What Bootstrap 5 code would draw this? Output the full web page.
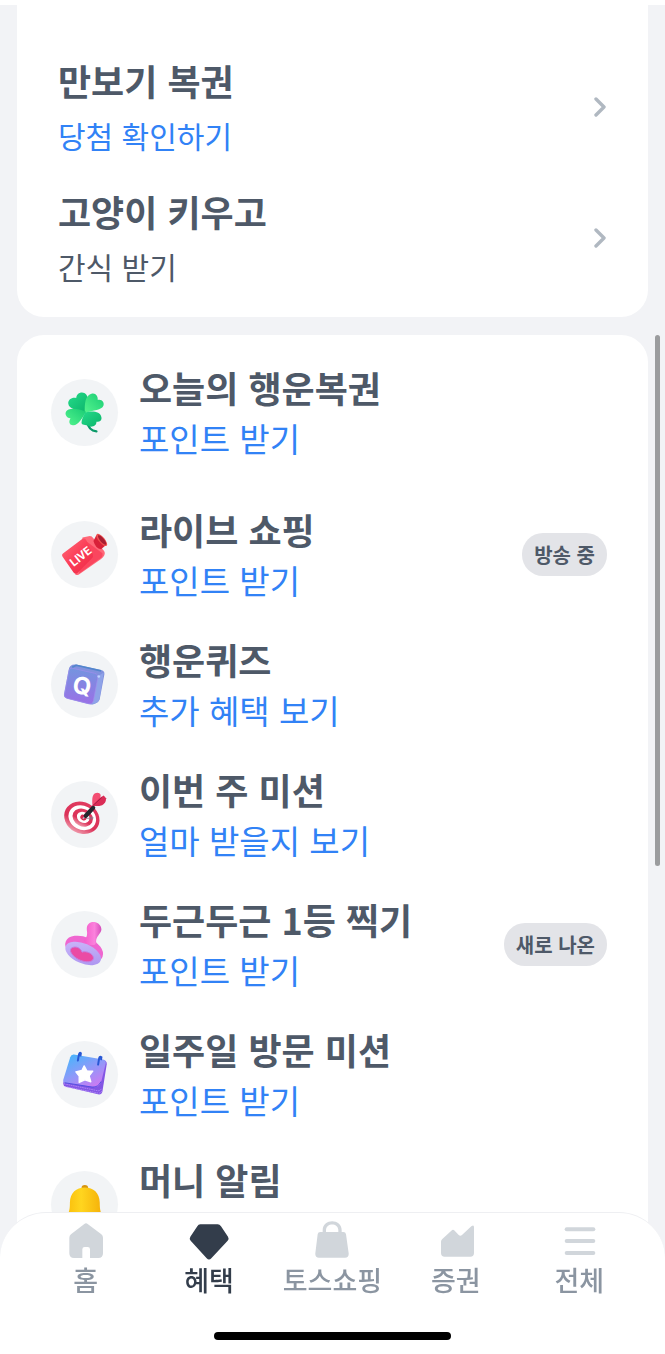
<!DOCTYPE html>
<html lang="ko">
<head>
<meta charset="utf-8">
<meta name="viewport" content="width=device-width, initial-scale=1">
<title>혜택</title>
<link href="https://cdn.jsdelivr.net/npm/bootstrap@5.3.0/dist/css/bootstrap.min.css" rel="stylesheet">
<style>
  body { background: #f2f3f6; color: #4e5968; font-family: "Noto Sans CJK KR", sans-serif; overflow: hidden; }
  a { color: inherit; text-decoration: none; }
  .page { height: 100vh; border-top: 5px solid #fff; padding: 0 17px; overflow: hidden; }
  .panel { background: #fff; border-radius: 27px; }
  .panel-top { border-radius: 0 0 27px 27px; padding: 36px 41px 14px; margin-bottom: 18px; }
  .panel-list { padding: 12px 41px 0 34px; }
  .game { height: 131px; }
  .benefit { height: 130px; gap: 21px; }
  .benefit-first { margin-bottom: 12px; }
  .row-title { font-size: 36px; font-weight: 700; line-height: 52px; }
  .game .row-title { line-height: 56px; }
  .game .row-note { font-size: 30px; line-height: 54px; }
  .row-note { font-size: 33px; line-height: 50px; }
  .text-point { color: #3182f6; }
  .disc { width: 67px; height: 67px; border-radius: 50%; background: #f2f4f6; flex: none; }
  .tag { background: #e3e4e8; color: #4e5968; border-radius: 21px; padding: 0 12px; font-size: 20px; font-weight: 700; line-height: 43px; }
  .thumb { position: fixed; top: 335px; right: 5px; width: 5px; height: 531px; border-radius: 3px; background: #9b9c9e; }
  .tabs { background: #fff; border-top: 1px solid #eeeff2; border-radius: 46px 46px 0 0; padding: 7px 24px 14px; }
  .tab { color: #8b95a1; font-size: 27px; line-height: 36px; font-weight: 500; }
  .tab svg { width: 42px; height: 42px; fill: #d1d6db; }
  .tab.active { color: #333d4b; }
  .tab.active svg { fill: #333d4b; }
  .home-bar { width: 237px; height: 8px; border-radius: 4px; background: #000; margin-top: 34px; }
</style>
</head>
<body>
<main class="page">
  <section class="panel panel-top">
    <a href="#" class="game d-flex align-items-center justify-content-between">
      <span class="d-flex flex-column"><span class="row-title">만보기 복권</span><span class="row-note text-point">당첨 확인하기</span></span>
      <svg width="14" height="20" viewBox="0 0 14 20" fill="none" stroke="#b0b8c1" stroke-width="3.4" stroke-linecap="round" stroke-linejoin="round" aria-hidden="true"><path d="M3 2l8 8-8 8"/></svg>
    </a>
    <a href="#" class="game d-flex align-items-center justify-content-between">
      <span class="d-flex flex-column"><span class="row-title">고양이 키우고</span><span class="row-note">간식 받기</span></span>
      <svg width="14" height="20" viewBox="0 0 14 20" fill="none" stroke="#b0b8c1" stroke-width="3.4" stroke-linecap="round" stroke-linejoin="round" aria-hidden="true"><path d="M3 2l8 8-8 8"/></svg>
    </a>
  </section>

  <section class="panel panel-list">
    <a href="#" class="benefit benefit-first d-flex align-items-center">
      <svg class="disc" viewBox="33 57 202 202" aria-hidden="true">
        <defs>
          <linearGradient id="leafA" x1="0" y1="0" x2="1" y2="1"><stop offset="0" stop-color="#25dc8a"/><stop offset="1" stop-color="#0bb36a"/></linearGradient>
          <linearGradient id="leafB" x1="0" y1="1" x2="1" y2="0"><stop offset="0" stop-color="#55f58e"/><stop offset="1" stop-color="#18cb74"/></linearGradient>
        </defs>
        <path d="M143 188c2 16 10 25 27 27" fill="none" stroke="#0b9a69" stroke-width="7" stroke-linecap="round"/>
        <path d="M137 160C112 150 87 149 85 131c-1-13 12-20 24-17 1-13 14-20 26-14 13 7 10 32 2 60z" fill="url(#leafA)"/>
        <path d="M135 160c-1-27 0-54 22-59 11-2 18 8 17 19 13-3 21 8 17 18-5 13-30 13-56 22z" fill="url(#leafB)"/>
        <path d="M139 156c-14 22-26 45-43 40-10-3-9-14-4-20-11-1-18-11-14-20 6-13 34-12 61 0z" fill="url(#leafB)"/>
        <path d="M136 158c21-6 46-3 49 14 2 9-6 15-15 14 1 12-14 18-24 13-8-5-21-2-21-10 0-9 5-20 11-31z" fill="url(#leafA)"/>
      </svg>
      <span class="d-flex flex-column"><span class="row-title">오늘의 행운복권</span><span class="row-note text-point">포인트 받기</span></span>
    </a>

    <a href="#" class="benefit d-flex align-items-center">
      <svg class="disc" viewBox="33 66 202 202" aria-hidden="true">
        <defs><linearGradient id="cam" x1="0" y1="0" x2="1" y2="1"><stop offset="0" stop-color="#ff6c7b"/><stop offset=".5" stop-color="#fb3d56"/><stop offset="1" stop-color="#ec2946"/></linearGradient></defs>
        <path d="M128 116l22-5q7 0 10 6l32 38q6 7 1 16-3 6-10 10l-66 46q-5 3-11 0z" fill="#ff6878"/>
        <path d="M130 120l58 43q2 9-6 15l-64 46z" fill="#f83b55" opacity=".75"/>
        <path d="M70 163l57-43q7-4 12 3l20 43q3 8-4 14l-42 43q-6 5-12-2l-33-47q-4-7 2-11z" fill="url(#cam)"/>
        <path d="M161 126l9-18 28 31-14 12q-17-2-23-25z" fill="#d92139"/>
        <ellipse cx="186" cy="123" rx="9" ry="23" transform="rotate(-40 186 123)" fill="#f0504f"/>
        <ellipse cx="187" cy="123" rx="6" ry="18" transform="rotate(-40 187 123)" fill="#a91d31"/>
        <text x="122" y="185" transform="rotate(-39 122 173)" text-anchor="middle" font-family="Roboto, sans-serif" font-weight="700" font-size="35" fill="#fff">LIVE</text>
      </svg>
      <span class="d-flex flex-column"><span class="row-title">라이브 쇼핑</span><span class="row-note text-point">포인트 받기</span></span>
      <span class="tag ms-auto">방송 중</span>
    </a>

    <a href="#" class="benefit d-flex align-items-center">
      <svg class="disc" viewBox="33 64 202 202" aria-hidden="true">
        <defs><linearGradient id="cube" x1="0" y1="0" x2="0" y2="1"><stop offset="0" stop-color="#7495df"/><stop offset="1" stop-color="#9a70e6"/></linearGradient></defs>
        <path d="M109 105l77 17q9 3 8 12l-14 75q-4 13-21 16-6 1-14-1l-64-17q-10-3-9-12l14-73q2-19 23-17z" fill="#8191de"/>
        <path d="M172 142l20-13-13 81q-5 12-22 14z" fill="#8fa3e8"/>
        <path d="M98 116l66 15q12 3 10 14l-13 68q-3 12-14 10l-64-16q-11-3-9-13l13-69q2-11 11-9z" fill="url(#cube)" stroke="#a28bee" stroke-width="2"/>
        <path d="M97 113l12-6 75 17" fill="none" stroke="#5286cc" stroke-width="5" stroke-linejoin="round"/>
        <circle cx="177" cy="141" r="4" fill="#bfd3ff"/>
        <text x="127" y="195" transform="rotate(8 127 169)" text-anchor="middle" font-family="Inter, sans-serif" font-weight="700" font-size="72" fill="#fff">Q</text>
      </svg>
      <span class="d-flex flex-column"><span class="row-title">행운퀴즈</span><span class="row-note text-point">추가 혜택 보기</span></span>
    </a>

    <a href="#" class="benefit d-flex align-items-center">
      <svg class="disc" viewBox="33 63 202 202" aria-hidden="true">
        <defs><linearGradient id="ring" x1="0" y1="0" x2="0" y2="1"><stop offset="0" stop-color="#e13b60"/><stop offset=".65" stop-color="#db3259"/><stop offset="1" stop-color="#ef98aa"/></linearGradient></defs>
        <g transform="rotate(28 126 174)">
          <ellipse cx="126" cy="174" rx="55" ry="47" fill="url(#ring)"/>
          <ellipse cx="127" cy="173" rx="43" ry="36" fill="#fff"/>
          <ellipse cx="128" cy="172" rx="32" ry="26" fill="url(#ring)"/>
          <ellipse cx="129" cy="171" rx="20" ry="16" fill="#fff"/>
          <ellipse cx="130" cy="171" rx="10" ry="8" fill="#d82950"/>
        </g>
        <path d="M135 177l23-7q8 4-2 9z" fill="#79798a" opacity=".6"/>
        <path d="M129 177l9-9" stroke="#b8bac3" stroke-width="4"/>
        <path d="M138 168l22-24" stroke="#25272e" stroke-width="13" stroke-linecap="round"/>
        <path d="M158 138c-1-18-2-32 8-38 8-4 17 0 17 8l-6 14z" fill="#f34d72"/>
        <path d="M158 138l21-24 13-7 7 8q0 15-12 21-12 4-29 2z" fill="#da2c56"/>
        <path d="M158 138l28-25" stroke="#a51d43" stroke-width="3"/>
      </svg>
      <span class="d-flex flex-column"><span class="row-title">이번 주 미션</span><span class="row-note text-point">얼마 받을지 보기</span></span>
    </a>

    <a href="#" class="benefit d-flex align-items-center">
      <svg class="disc" viewBox="33 62 202 202" aria-hidden="true">
        <defs>
          <linearGradient id="grip" x1="0" y1="0" x2="1" y2="0"><stop offset="0" stop-color="#f45bcb"/><stop offset=".6" stop-color="#fb82dc"/><stop offset="1" stop-color="#d44ebb"/></linearGradient>
          <linearGradient id="rim" x1="0" y1="0" x2="1" y2="1"><stop offset="0" stop-color="#cdbafa"/><stop offset="1" stop-color="#a992f0"/></linearGradient>
        </defs>
        <ellipse cx="133" cy="177" rx="60" ry="36" transform="rotate(23 133 177)" fill="#ef66d0"/>
        <path d="M133 150q12-12 8-31c-3-33 42-29 44-2 0 14-21 23-15 43-8 9-36 5-37-10z" fill="url(#grip)"/>
        <ellipse cx="130" cy="190" rx="57" ry="30" transform="rotate(23 130 190)" fill="url(#rim)"/>
        <path d="M94 174c12-7 26-3 33 12 10-5 36 4 34 20-4 11-22 11-38 5-19-7-38-26-29-37z" fill="#ea4ba4" stroke="#c67cdf" stroke-width="3"/>
      </svg>
      <span class="d-flex flex-column"><span class="row-title">두근두근 1등 찍기</span><span class="row-note text-point">포인트 받기</span></span>
      <span class="tag ms-auto">새로 나온</span>
    </a>

    <a href="#" class="benefit d-flex align-items-center">
      <svg class="disc" viewBox="33 61 202 202" aria-hidden="true">
        <defs><linearGradient id="cal" x1=".1" y1="0" x2=".8" y2="1"><stop offset="0" stop-color="#42b7fc"/><stop offset=".5" stop-color="#8c9af9"/><stop offset="1" stop-color="#d078f2"/></linearGradient></defs>
        <path d="M102 106l91 13q9 3 8 12l-13 82q-2 9-10 9l-100-23q-9-3-8-12z" fill="#8356e4"/>
        <path d="M72 190l102 21q8 1 11-7M74 198l101 20q9 1 12-8" fill="none" stroke="#c29cff" stroke-width="2" stroke-dasharray="5 2"/>
        <path d="M102 102l88 15q10 3 8 12l-14 56q-7 17-23 15l-84-12q-9-2-7-10l21-68q3-9 11-8z" fill="url(#cal)"/>
        <path d="M184 183q-8 18-27 17l-82-13" fill="none" stroke="#5550e2" stroke-width="3"/>
        <path d="M133 136l8 15 18 1-11 14 5 18-18-6-17 8 0-19-10-13 18-4z" fill="#fff" stroke="#fff" stroke-width="4" stroke-linejoin="round"/>
        <path d="M114 120l3-17q2-9 6-5l-1 7M175 132l3-18q2-8 7-4l-1 6" fill="none" stroke="#2757d4" stroke-width="6" stroke-linecap="round"/>
      </svg>
      <span class="d-flex flex-column"><span class="row-title">일주일 방문 미션</span><span class="row-note text-point">포인트 받기</span></span>
    </a>

    <a href="#" class="benefit d-flex align-items-center">
      <svg class="disc" viewBox="153 59 202 202" aria-hidden="true">
        <defs><linearGradient id="bell" x1="0" y1="0" x2="1" y2="0"><stop offset="0" stop-color="#fabd0b"/><stop offset=".4" stop-color="#ffd51f"/><stop offset="1" stop-color="#f4ae08"/></linearGradient></defs>
        <circle cx="255" cy="212" r="13" fill="#c77b08"/>
        <circle cx="255" cy="111" r="10" fill="#d79410"/>
        <path d="M210 154c1-29 19-45 45-45s44 16 45 45c0 24 3 30 9 40 5 11-2 14-12 14h-84c-11 0-17-3-12-14 7-12 9-19 9-40z" fill="url(#bell)"/>
      </svg>
      <span class="d-flex flex-column"><span class="row-title">머니 알림</span><span class="row-note text-point">포인트 받기</span></span>
    </a>
  </section>
</main>

<div class="thumb"></div>

<nav class="tabs fixed-bottom">
  <div class="row g-0 row-cols-5 text-center">
    <a href="#" class="tab col d-flex flex-column align-items-center">
      <svg viewBox="195 210 126 126" aria-hidden="true"><path d="M253 222q5-4 10 0l41 31q5 4 5 10v47q0 14-14 14h-25v-26q0-7-7-7h-9q-7 0-7 7v26h-25q-14 0-14-14v-47q0-6 5-10z"/></svg>
      <span>홈</span>
    </a>
    <a href="#" class="tab active col d-flex flex-column align-items-center" aria-current="page">
      <svg viewBox="565 210 126 126" aria-hidden="true"><path d="M602 223h52q6 0 10 6l21 31q4 6-1 12l-49 53q-7 7-14 0l-48-53q-5-6-1-12l21-31q3-6 9-6z"/></svg>
      <span>혜택</span>
    </a>
    <a href="#" class="tab col d-flex flex-column align-items-center">
      <svg viewBox="-41 210 126 126" aria-hidden="true"><path d="M-19 246h13v-6c0-35 57-35 57 0v6h5q7 0 8 7l8 57q1 13-11 13h-78q-12 0-11-13l7-57q1-7 8-7zm23 0h37v-5c0-23-37-23-37 0z" fill-rule="evenodd"/></svg>
      <span>토스쇼핑</span>
    </a>
    <a href="#" class="tab col d-flex flex-column align-items-center">
      <svg viewBox="327 210 126 126" aria-hidden="true"><path d="M349 267l27-25q5-5 10 0l12 13q5 5 10 0l28-26q8-6 8 3v77q0 11-11 11h-77q-11 0-11-11v-34q0-5 4-8z"/></svg>
      <span>증권</span>
    </a>
    <a href="#" class="tab col d-flex flex-column align-items-center">
      <svg viewBox="700 210 126 126" aria-hidden="true"><rect x="720" y="232" width="92" height="12" rx="6"/><rect x="720" y="267" width="92" height="12" rx="6"/><rect x="720" y="303" width="92" height="12" rx="6"/></svg>
      <span>전체</span>
    </a>
  </div>
  <div class="home-bar mx-auto"></div>
</nav>
<script src="https://cdn.jsdelivr.net/npm/bootstrap@5.3.0/dist/js/bootstrap.bundle.min.js"></script>
</body>
</html>
